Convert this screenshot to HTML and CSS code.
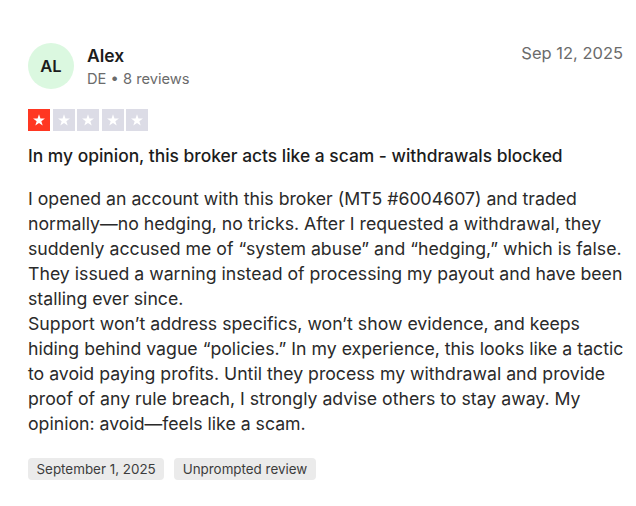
FILE: index.html
```html
<!DOCTYPE html>
<html>
<head>
<meta charset="utf-8">
<link rel="stylesheet" href="styles.css">
</head>
<body>
<article class="review">
  <header class="head">
    <div class="user">
      <div class="avatar">AL</div>
      <div class="who">
        <div class="name">Alex</div>
        <div class="meta">DE • 8 reviews</div>
      </div>
    </div>
    <time class="date">Sep 12, 2025</time>
  </header>
  <div class="stars">
    <span class="star on"><svg viewBox="0 0 24 24"><path d="M12 5.2l1.75 5.1h5.4l-4.35 3.15 1.65 5.15L12 15.45 7.55 18.6l1.65-5.15L4.85 10.3h5.4z"/></svg></span>
    <span class="star"><svg viewBox="0 0 24 24"><path d="M12 5.2l1.75 5.1h5.4l-4.35 3.15 1.65 5.15L12 15.45 7.55 18.6l1.65-5.15L4.85 10.3h5.4z"/></svg></span>
    <span class="star"><svg viewBox="0 0 24 24"><path d="M12 5.2l1.75 5.1h5.4l-4.35 3.15 1.65 5.15L12 15.45 7.55 18.6l1.65-5.15L4.85 10.3h5.4z"/></svg></span>
    <span class="star"><svg viewBox="0 0 24 24"><path d="M12 5.2l1.75 5.1h5.4l-4.35 3.15 1.65 5.15L12 15.45 7.55 18.6l1.65-5.15L4.85 10.3h5.4z"/></svg></span>
    <span class="star"><svg viewBox="0 0 24 24"><path d="M12 5.2l1.75 5.1h5.4l-4.35 3.15 1.65 5.15L12 15.45 7.55 18.6l1.65-5.15L4.85 10.3h5.4z"/></svg></span>
  </div>
  <h2 class="title">In my opinion, this broker acts like a scam - withdrawals blocked</h2>
  <p class="body">I opened an account with this broker (MT5 #6004607) and traded normally—no hedging, no tricks. After I requested a withdrawal, they suddenly accused me of “system abuse” and “hedging,” which is false. They issued a warning instead of processing my payout and have been stalling ever since.<br>Support won’t address specifics, won’t show evidence, and keeps hiding behind vague “policies.” In my experience, this looks like a tactic to avoid paying profits. Until they process my withdrawal and provide proof of any rule breach, I strongly advise others to stay away. My opinion: avoid—feels like a scam.</p>
  <div class="tags">
    <span class="tag">September 1, 2025</span>
    <span class="tag">Unprompted review</span>
  </div>
</article>
</body>
</html>
```

FILE: styles.css
```css
html, body {
  margin: 0;
  padding: 0;
  background: #ffffff;
}
body {
  font-family: "Inter", "Noto Sans", sans-serif;
  color: #1c1c1c;
}
.review {
  padding: 43px 4px 0 28px;
}
.head {
  display: flex;
  justify-content: space-between;
  align-items: flex-start;
  margin-right: 9px;
}
.user {
  display: flex;
  align-items: center;
  gap: 13px;
}
.avatar {
  width: 46px;
  height: 46px;
  border-radius: 50%;
  background: #dbf8e0;
  color: #1c1c1c;
  display: flex;
  align-items: center;
  justify-content: center;
  font-weight: 600;
  font-size: 16.5px;
}
.who {
  display: flex;
  flex-direction: column;
  gap: 4px;
}
.name {
  font-size: 17.5px;
  font-weight: 600;
  line-height: 21px;
}
.meta {
  font-size: 14.7px;
  color: #6b6b6b;
  line-height: 18px;
}
.date {
  font-size: 16.5px;
  color: #6b6b6b;
  line-height: 20px;
}
.stars {
  display: flex;
  gap: 2.5px;
  margin-top: 20px;
}
.star {
  width: 22px;
  height: 22px;
  background: #dcdce6;
  display: flex;
  align-items: center;
  justify-content: center;
}
.star.on {
  background: #ff3722;
}
.star svg {
  width: 20px;
  height: 20px;
  fill: #ffffff;
}
.title {
  font-size: 17.4px;
  font-weight: 500;
  line-height: 22px;
  margin: 14px 0 0 0;
}
.body {
  font-size: 17.7px;
  line-height: 25px;
  margin: 19px 0 0 0;
  color: #2a2a2a;
}
.tags {
  display: flex;
  gap: 10px;
  margin-top: 22px;
}
.tag {
  background: #ebebeb;
  border-radius: 4px;
  font-size: 13.4px;
  line-height: 22px;
  padding: 0 8.5px;
  color: #3c3c3c;
}
```
